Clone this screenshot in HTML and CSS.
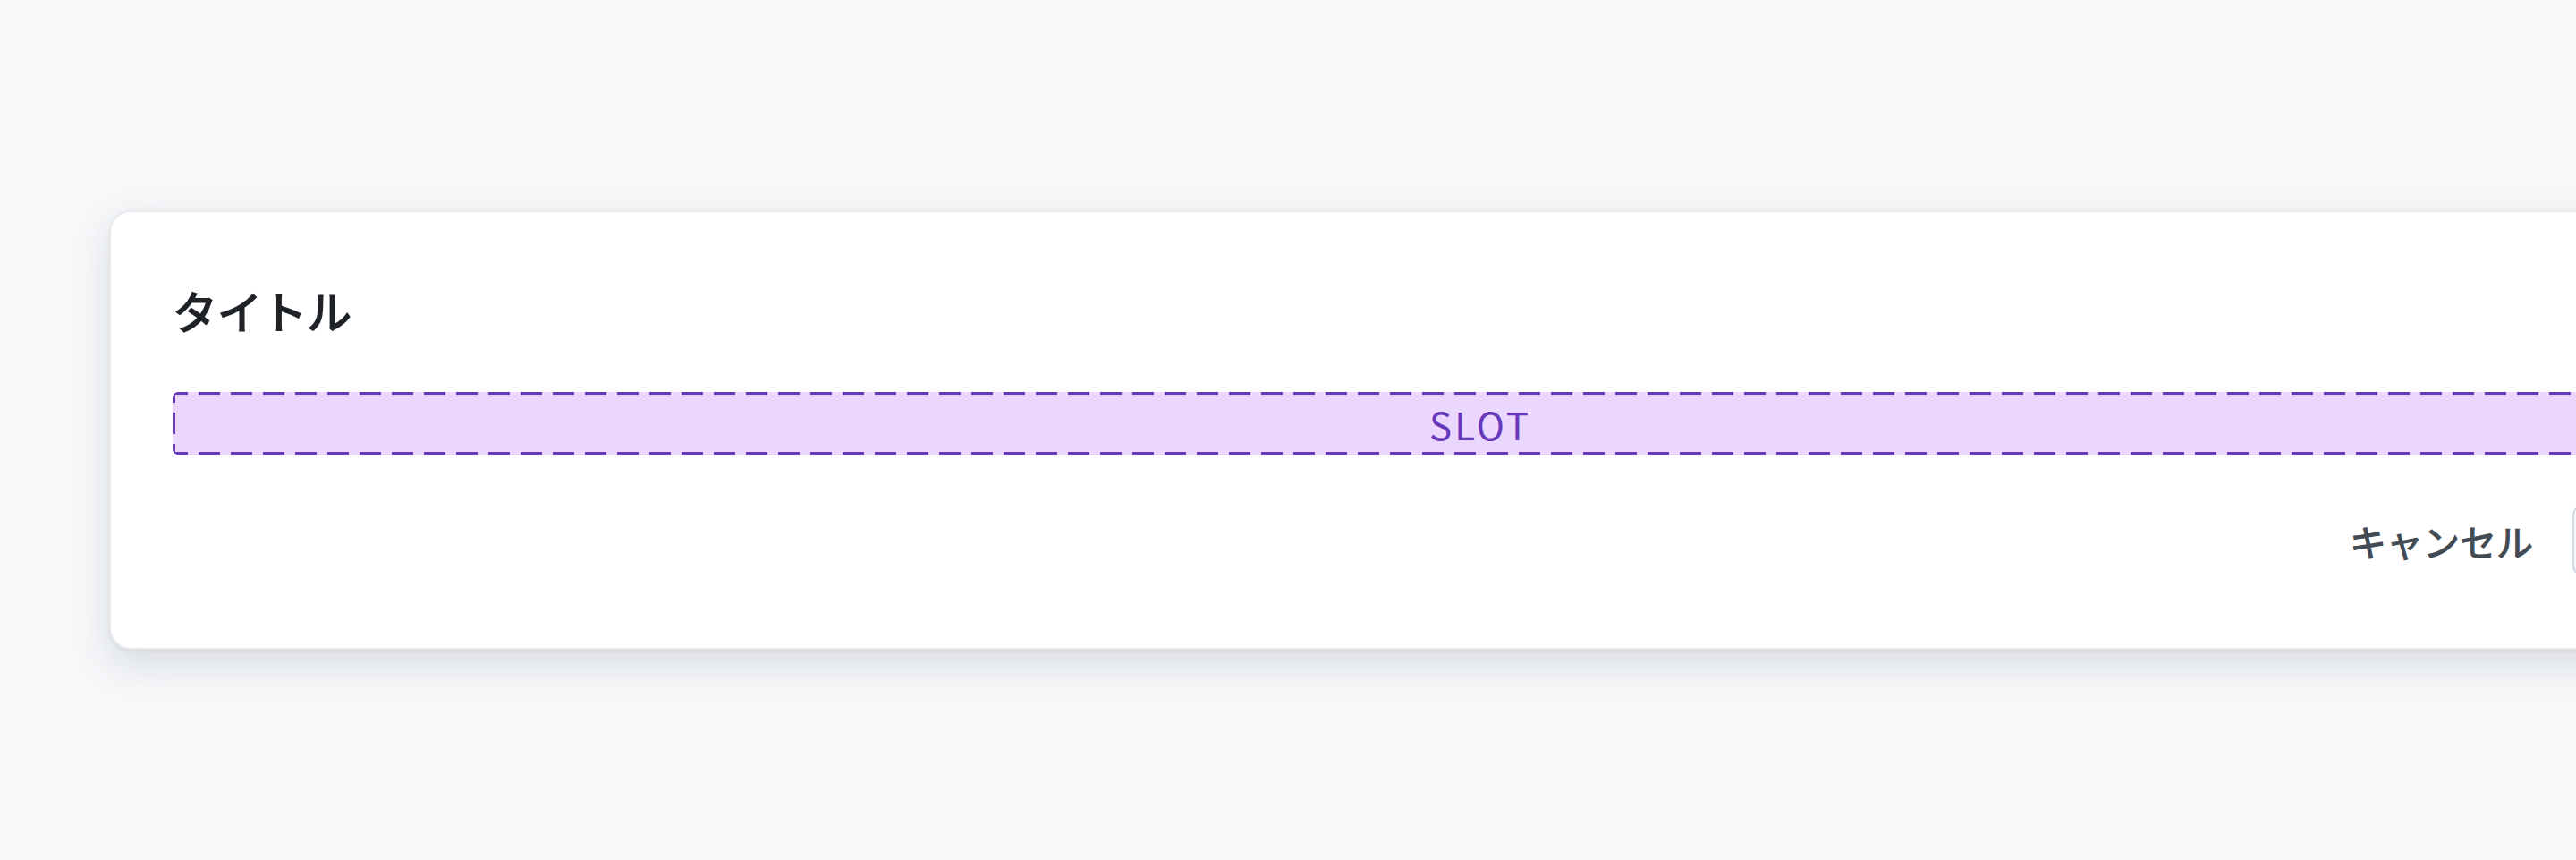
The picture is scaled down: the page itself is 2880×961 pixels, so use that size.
FILE: index.html
```html
<!DOCTYPE html>
<html lang="ja">
<head>
    <meta charset="UTF-8">
    <meta name="viewport" content="width=device-width, initial-scale=1.0">
    <title>Dialog</title>
    <link rel="stylesheet" href="styles.css">
</head>
<body>
    <div class="stage">
        <div class="dialog" role="dialog" aria-labelledby="dialog-title">
            <h1 class="dialog-title" id="dialog-title">タイトル</h1>

            <!-- Body slot placeholder -->
            <div class="slot">SLOT</div>

            <div class="dialog-footer">
                <button class="btn btn-invisible">キャンセル</button>
                <button class="btn btn-default">保存する</button>
            </div>
        </div>
    </div>
</body>
</html>
```

FILE: styles.css
```css
html, body {
    margin: 0;
    padding: 0;
    height: 100%;
    background-color: #f6f8fa;
    font-family: "Noto Sans CJK JP", "Noto Sans", sans-serif;
    color: #1f2328;
}

.stage {
    height: 961px;
    display: flex;
    align-items: center;
    padding-left: 122px;
    overflow: hidden;
}

/* Dialog card */
.dialog {
    flex-shrink: 0;
    width: 3066px;
    box-sizing: border-box;
    display: flex;
    flex-direction: column;
    padding: 72px 69px 80px;
    background-color: #fff;
    border: 2px solid #e6e9ed;
    border-radius: 24px;
    box-shadow: 0 2px 3px rgba(31, 35, 40, 0.06), 0 16px 44px rgba(66, 74, 83, 0.16);
}

/* medium weight is not installed, so thicken the regular face a little */
.dialog-title {
    margin: 0;
    font-size: 50px;
    font-weight: 400;
    -webkit-text-stroke: 1.8px #1f2328;
    line-height: 75px;
    color: #1f2328;
}

.slot {
    margin-top: 54px;
    height: 70px;
    display: flex;
    align-items: center;
    justify-content: center;
    border-radius: 6px;
    color: #6639ba;
    font-size: 42px;
    letter-spacing: 3px;
    background:
        repeating-linear-gradient(90deg, #6639ba 0 17px, transparent 17px 29px, #6639ba 29px 36px) top left / 100% 3px no-repeat,
        repeating-linear-gradient(90deg, #6639ba 0 17px, transparent 17px 29px, #6639ba 29px 36px) bottom left / 100% 3px no-repeat,
        linear-gradient(180deg, #6639ba 0 12px, transparent 12px 23px, #6639ba 23px 47px, transparent 47px 58px, #6639ba 58px 100%) top left / 3px 100% no-repeat,
        linear-gradient(180deg, #6639ba 0 12px, transparent 12px 23px, #6639ba 23px 47px, transparent 47px 58px, #6639ba 58px 100%) top right / 3px 100% no-repeat,
        #ebd6fd;
}

.dialog-footer {
    margin-top: 56px;
    display: flex;
    justify-content: flex-end;
    gap: 16px;
}

.btn {
    height: 80px;
    padding: 0 26px 0 30px;
    font-family: inherit;
    font-size: 41px;
    font-weight: 400;
    -webkit-text-stroke: 1.1px currentColor;
    border-radius: 12px;
    cursor: pointer;
}

.btn-invisible {
    background: transparent;
    border: 2px solid transparent;
    color: #424a53;
}

.btn-default {
    min-width: 241px;
    padding: 0 32px;
    background-color: #f6f8fa;
    border: 2px solid #d1d9e0;
    color: #25292e;
}
```
